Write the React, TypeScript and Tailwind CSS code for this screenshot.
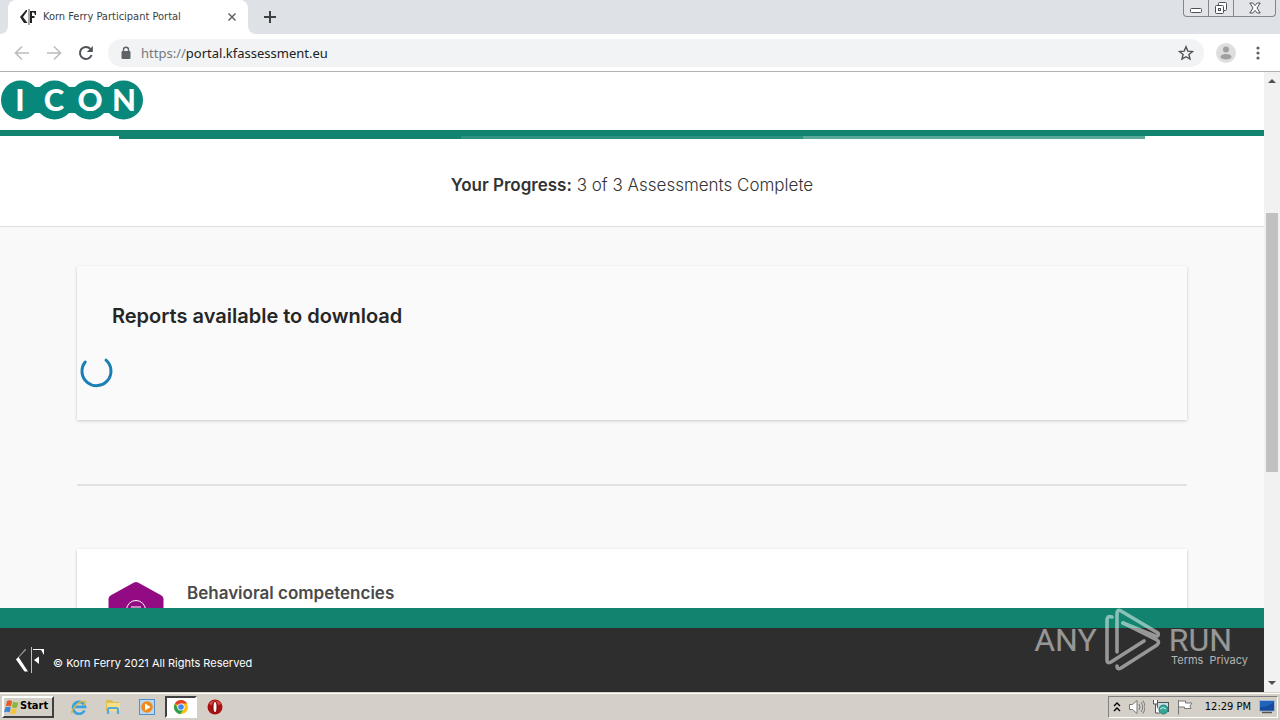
import type { ReactNode } from 'react';

const SEGMENTS = ['bg-[#12836f]', 'bg-[#2f917f]', 'bg-[#5aa99b]'];

function KornFerryMark({ className }: { className: string }) {
  return (
    <svg viewBox="0 0 28 28" className={className} fill="currentColor" aria-hidden="true">
      <path d="M9 3 0 13.500h1L10 4V3z" opacity=".5" />
      <path d="M2.500 11 0 13.500 8.500 25.500h3.500z" />
      <path d="M15 1h1v26h-1z" opacity=".7" />
      <path d="M17 3h11v6l-3-5h-8z" />
      <path d="M18 14l5-3.500V18z" />
    </svg>
  );
}

function TabStrip() {
  return (
    <div className="flex h-[34px] justify-between bg-[#dee1e6]">
      <div className="flex">
        {/* curved feet on both sides of the active tab */}
        <div className="flex w-2 flex-col justify-end">
          <div className="h-2 bg-white">
            <div className="h-2 rounded-br-lg bg-[#dee1e6]" />
          </div>
        </div>
        <div className="flex w-60 items-center rounded-t-lg bg-white pl-3 pr-2">
          <svg viewBox="0 0 16 16" className="h-4 w-4 shrink-0" aria-hidden="true">
            <path d="M6 1 0 8l4 6h3.500L3 8l4-5.500V1z" fill="#222" />
            <path d="M8.500 0h1v16h-1z" fill="#555" />
            <path d="M10 2h6v4h-1l-1-2.500h-2V7h2.500v2H12v5h-2z" fill="#222" />
          </svg>
          <span className="ml-[7px] flex-1 whitespace-nowrap font-['DejaVu_Sans_Condensed','DejaVu_Sans',sans-serif] text-[11px] text-[#3c4043]">
            Korn Ferry Participant Portal
          </span>
          <button type="button" aria-label="Close tab" className="p-1">
            <svg viewBox="0 0 8 8" className="h-2 w-2" stroke="#5f6368" strokeWidth="1.500">
              <path d="M.5.5l7 7M7.500.5l-7 7" />
            </svg>
          </button>
        </div>
        <div className="flex w-2 flex-col justify-end">
          <div className="h-2 bg-white">
            <div className="h-2 rounded-bl-lg bg-[#dee1e6]" />
          </div>
        </div>
        <button type="button" aria-label="New tab" className="px-2">
          <svg viewBox="0 0 12 12" className="h-3 w-3" stroke="#3c4043" strokeWidth="2">
            <path d="M6 0v12M0 6h12" />
          </svg>
        </button>
      </div>
      <div className="mr-1 flex h-[17px] rounded-b border border-t-0 border-[#84868b] bg-[#e2e4e8]">
        <button type="button" aria-label="Minimize" className="flex w-6 items-center justify-center">
          <svg viewBox="0 0 12 12" className="h-3 w-3" fill="#fff" stroke="#4a4f57">
            <rect x=".5" y="6.500" width="11" height="4" rx="1" />
          </svg>
        </button>
        <button type="button" aria-label="Restore" className="flex w-[26px] items-center justify-center border-x border-[#84868b]">
          <svg viewBox="0 0 14 14" className="h-3.5 w-3.5" fill="#fff" stroke="#4a4f57">
            <rect x="4.500" y="1.500" width="8" height="8" rx="1" />
            <rect x="1.500" y="4.500" width="8" height="8" rx="1" />
            <rect x="4.500" y="7.500" width="2" height="2" />
          </svg>
        </button>
        <button type="button" aria-label="Close" className="flex w-[41px] items-center justify-center">
          <svg viewBox="0 0 12 12" className="h-3 w-3" fill="#fff" stroke="#4a4f57">
            <path d="M.8 1h3L6 3.600 8.200 1h3L8 6l3.200 5h-3L6 8.400 3.800 11h-3L4 6z" />
          </svg>
        </button>
      </div>
    </div>
  );
}

function Toolbar() {
  return (
    <div className="flex h-[38px] items-center border-b border-[#b0b1b3] bg-white pl-3.5 pr-4">
      <button type="button" aria-label="Back" className="flex w-8">
        <svg viewBox="0 0 16 16" className="h-4 w-4" fill="none" stroke="#babcbe" strokeWidth="1.600">
          <path d="M15 8H2M8 1.500 1.500 8 8 14.500" />
        </svg>
      </button>
      <button type="button" aria-label="Forward" className="flex w-8">
        <svg viewBox="0 0 16 16" className="h-4 w-4" fill="none" stroke="#babcbe" strokeWidth="1.600">
          <path d="M1 8h13M8 1.500 14.500 8 8 14.500" />
        </svg>
      </button>
      <button type="button" aria-label="Reload" className="flex w-[30px]">
        <svg viewBox="0 0 16 16" className="h-4 w-4" fill="none" stroke="#4f5358" strokeWidth="2">
          <path d="M13.600 10A6 6 0 1 1 12.400 3.900" />
          <path d="M14.800 1v6H8.800z" fill="#4f5358" stroke="none" />
        </svg>
      </button>
      <div className="flex h-7 flex-1 items-center rounded-full bg-[#f1f3f4] pl-3 pr-2.5">
        <svg viewBox="0 0 12 14" className="h-3.5 w-3" aria-hidden="true">
          <rect x="1.500" y="5" width="9" height="8" rx="1" fill="#5f6368" />
          <path d="M3.500 6V3.800a2.500 2.500 0 0 1 5 0V6" fill="none" stroke="#5f6368" strokeWidth="1.400" />
        </svg>
        <a href="#top" className="ml-[9px] flex-1 font-['Noto_Sans',sans-serif] text-[13px] leading-5 text-[#202124]">
          <span className="text-[#75797e]">https://</span>portal.kfassessment.eu
        </a>
        <button type="button" aria-label="Bookmark">
          <svg viewBox="0 0 16 16" className="h-4 w-4" fill="none" stroke="#4f5358" strokeWidth="1.400">
            <path d="M8 1.800l1.800 4.300 4.700.4-3.600 3 1.100 4.600L8 11.700l-4 2.400 1.100-4.600-3.600-3 4.700-.4z" />
          </svg>
        </button>
      </div>
      <button type="button" aria-label="Profile" className="ml-3">
        <svg viewBox="0 0 20 20" className="h-5 w-5">
          <circle cx="10" cy="10" r="10" fill="#dedede" />
          <circle cx="10" cy="6.500" r="3" fill="#a0a0a0" />
          <ellipse cx="10" cy="13.800" rx="5.500" ry="2.800" fill="#a0a0a0" />
        </svg>
      </button>
      <button type="button" aria-label="Menu" className="ml-4 px-1">
        <svg viewBox="0 0 4 14" className="h-3.5 w-1" fill="#5f6368">
          <circle cx="2" cy="2" r="1.600" />
          <circle cx="2" cy="7" r="1.600" />
          <circle cx="2" cy="12" r="1.600" />
        </svg>
      </button>
    </div>
  );
}

function IconLogo() {
  return (
    <svg viewBox="0 0 144 40" className="h-10 w-36" role="img" aria-label="ICON">
      <g fill="#07887a">
        <circle cx="20.500" cy="20" r="19.500" />
        <circle cx="54.500" cy="20" r="19.500" />
        <circle cx="89.500" cy="20" r="19.500" />
        <circle cx="123.500" cy="20" r="19.500" />
        <path d="M30 7h84v26H30z" />
      </g>
      <g fill="#fff" textAnchor="middle" className="font-[Lato,sans-serif] text-[31px] font-black">
        <text x="20" y="31">I</text>
        <text x="54" y="31">C</text>
        <text x="90" y="31">O</text>
        <text x="124" y="31">N</text>
      </g>
    </svg>
  );
}

function Portal() {
  return (
    <div className="flex min-w-0 flex-1 flex-col bg-[#f9f9f9] font-[Inter,sans-serif]">
      <header className="border-b-6 border-[#12836f] bg-white pb-2.5 pt-2">
        <IconLogo />
      </header>

      <main className="min-h-0 flex-1 overflow-hidden">
        <section className="h-[91px] border-b border-[#e0e0e0] bg-white">
          <div className="mx-[119px] flex h-[3px]">
            {SEGMENTS.map((color) => (
              <div key={color} className={`flex-1 ${color}`} />
            ))}
          </div>
          <p className="pt-[34px] text-center text-[17px] font-light leading-6 text-[#333]">
            <strong className="font-semibold">Your Progress:</strong> 3 of 3 Assessments Complete
          </p>
        </section>

        <div className="px-[77px] pt-[39px]">
          <section className="h-[154px] bg-[#fafafa] pt-[38px] shadow-[0_1px_3px_rgba(0,0,0,0.2)]">
            <h2 className="pl-[35px] text-[20px] font-semibold leading-6 text-[#262626]">Reports available to download</h2>
            <svg viewBox="0 0 36 36" className="mt-[25px] h-9 w-9 ml-px" fill="none" stroke="#1a7fb5" strokeWidth="3" strokeLinecap="round" role="img" aria-label="Loading">
              <path d="M7.200 9A14.500 14.500 0 1 0 28 7.200" />
            </svg>
          </section>

          <hr className="mb-[63px] mt-16 border-t-2 border-[#e2e2e2]" />

          <section className="flex h-52 bg-white pl-[31px] pt-8 shadow-[0_1px_3px_rgba(0,0,0,0.2)]">
            <svg viewBox="0 0 56 64" className="h-16 w-14" aria-hidden="true">
              <path d="M26 1.500q2-1 4 0l23.500 13q2 1 2 3.500v28q0 2.500-2 3.500L30 62.500q-2 1-4 0l-23.500-13q-2-1-2-3.500V18q0-2.500 2-3.500z" fill="#920b82" />
              <g fill="none" stroke="#fff">
                <circle cx="28" cy="29" r="9.500" />
                <path d="M23 26h10M25 28v4m6-4v4" />
              </g>
            </svg>
            <h3 className="ml-[23px] text-[17px] font-semibold leading-6 text-[#4a4a4a]">Behavioral competencies</h3>
          </section>
        </div>
      </main>

      <footer className="flex h-[84px] items-center justify-between border-t-20 border-[#12836f] bg-[#2e2e2e] px-4 text-[11px] text-white">
        <div className="flex items-center">
          <KornFerryMark className="h-7 w-7" />
          <span className="ml-[9px] mt-1.5">© Korn Ferry 2021 All Rights Reserved</span>
        </div>
        <nav className="flex gap-1.5 text-[#b4b4b4]">
          <a href="#terms">Terms</a>
          <a href="#privacy">Privacy</a>
        </nav>
      </footer>
    </div>
  );
}

function Scrollbar() {
  return (
    <div className="flex w-4 flex-col items-center justify-between bg-[#f1f1f1] py-[7px]">
      <svg viewBox="0 0 8 4" className="h-1 w-2" fill="#505050"><path d="M0 4l4-4 4 4z" /></svg>
      <div className="flex w-3 flex-1 flex-col">
        <div className="flex-[130]" />
        <div className="flex-[259] bg-[#c1c1c1]" />
        <div className="flex-[209]" />
      </div>
      <svg viewBox="0 0 8 4" className="h-1 w-2" fill="#505050"><path d="M0 0l4 4 4-4z" /></svg>
    </div>
  );
}

function Watermark() {
  return (
    <div className="pointer-events-none absolute bottom-12 right-12 flex items-center font-['Liberation_Sans_Narrow','Roboto',sans-serif] text-[32px] leading-6 text-white opacity-50">
      <span>ANY</span>
      <svg viewBox="0 0 56 64" className="mx-2 h-16 w-14" fill="none" stroke="currentColor" strokeWidth="3.600" strokeLinejoin="round" strokeLinecap="round">
        <path d="M7 9Q2 7 2 13v39q0 4 4 2l33-21" />
        <path d="M12 44V6q0-5 4-3l37 22q1 4-3 3L18 15" />
        <path d="M12 58q0 4 4 2l36-23q3-3 0-5L18 15" />
      </svg>
      <span>RUN</span>
    </div>
  );
}

function TaskButton({ label, active, children }: { label: string; active?: boolean; children: ReactNode }) {
  return (
    <button
      type="button"
      aria-label={label}
      className={`flex h-[22px] w-8 items-center justify-center ${active ? 'border-2 border-b-white border-l-[#404040] border-r-white border-t-[#404040] bg-white' : ''}`}
    >
      <svg viewBox="0 0 16 16" className="h-4 w-4 shrink-0">{children}</svg>
    </button>
  );
}

function Taskbar() {
  return (
    <div className="flex h-7 items-center justify-between border-t border-[#d4d0c8] bg-[#d4d0c8] px-0.5 font-['DejaVu_Sans_Condensed','DejaVu_Sans',sans-serif] shadow-[inset_0_1px_0_#fff]">
      <div className="flex items-center gap-0.5">
        <button type="button" className="mr-[7px] flex h-[22px] w-[52px] items-center border-2 border-b-[#404040] border-l-white border-r-[#404040] border-t-white text-[11px] font-bold text-black">
          <svg viewBox="0 0 16 16" className="h-4 w-4 shrink-0">
            <path d="M3 2q3-1.500 5 .2L7 7.500Q5 6 1.800 7.200z" fill="#e75b24" />
            <path d="M9 2.800q3 1.500 5.500.2L13 8.500q-3 1-5-.5z" fill="#86b83a" />
            <path d="M1.500 8.200Q5 7 6.800 8.500L5.600 13.500Q3.500 12 0 13.200z" fill="#3f85d0" />
            <path d="M7.800 9q2.500 1.500 5 .5L11.500 14.500Q8.500 16 6.500 14z" fill="#f8c52c" />
          </svg>
          Start
        </button>
        <TaskButton label="Internet Explorer">
          <path d="M13.500 11.500A6 6 0 1 1 14 7.800H4" fill="none" stroke="#3aa2df" strokeWidth="2.800" />
          <path d="M1.500 14.500Q-1 13 4.500 7T14.800 2.500q-.2 2-2.300 4" fill="none" stroke="#e3b92d" strokeWidth="1.300" />
        </TaskButton>
        <TaskButton label="Explorer">
          <path d="M1 1h6l1 2h6v9H1z" fill="#e0bd52" />
          <path d="M2 4h13v8H2z" fill="#f7df88" />
          <path d="M3 15v-4.500Q3 9 4.500 9h7q1.500 0 1.500 1.500V15" fill="none" stroke="#56a9d8" strokeWidth="2.200" />
        </TaskButton>
        <TaskButton label="Media Player">
          <rect x=".5" y=".5" width="15" height="15" fill="#b9d9f3" stroke="#5190c8" />
          <circle cx="8" cy="8" r="5.800" fill="#f08a1c" />
          <path d="M6 4.500 11.500 8 6 11.500z" fill="#fff" />
        </TaskButton>
        <TaskButton label="Chrome" active>
          <circle cx="8" cy="8" r="7" fill="#fbc116" />
          <path d="M8 8 1.900 4.500A7 7 0 0 1 14.100 4.500H8z" fill="#e04132" />
          <path d="M1.900 4.500A7 7 0 0 0 7.500 15L11 9.800 5 9.700z" fill="#2da04e" />
          <circle cx="8" cy="8" r="3.600" fill="#fff" />
          <circle cx="8" cy="8" r="2.800" fill="#4285f4" />
        </TaskButton>
        <TaskButton label="Opera">
          <circle cx="8" cy="8" r="7.500" fill="#a81212" />
          <path d="M2 5a7 7 0 0 1 12 0Q8 8 2 5z" fill="#d84a42" />
          <ellipse cx="8" cy="8" rx="3" ry="6" fill="#8c0c0c" />
          <ellipse cx="8" cy="8" rx="1.500" ry="5" fill="#fff" />
        </TaskButton>
      </div>

      <div className="flex h-[22px] items-center gap-2 border border-b-white border-l-[#808080] border-r-white border-t-[#808080] pl-1 pr-0.5 text-[11px] text-black">
        <svg viewBox="0 0 8 10" className="h-2.5 w-2" fill="none" stroke="#000" strokeWidth="1.400">
          <path d="M1 4l3-3 3 3M1 9l3-3 3 3" />
        </svg>
        <svg viewBox="0 0 16 16" className="h-4 w-4" fill="none" stroke="#777">
          <path d="M.5 5.500h3L8 1.500v13L3.500 10.500h-3z" fill="#fff" />
          <path d="M10 5q2 3 0 6M12 3q3.500 5 0 10M14 1.500q4 6.500 0 13" />
        </svg>
        <svg viewBox="0 0 16 16" className="h-4 w-4" fill="none" stroke="#555">
          <rect x="4.500" y="3.500" width="11" height="9" fill="#c6dfe5" />
          <path d="M.5 1v4h4V1M2.500 5v9H7" fill="#fff" />
          <circle cx="10.500" cy="10.500" r="4.500" fill="#37a69a" stroke="#287e79" />
          <path d="M7 10q3-3 6 0" stroke="#d5f3dc" />
        </svg>
        <svg viewBox="0 0 16 16" className="h-4 w-4" fill="#fff" stroke="#777">
          <path d="M1.500 1v14.500M1.500 2h7v2h6.500l-2 3 1 2.500H7.500V8h-6z" />
        </svg>
        <time className="ml-1 mt-0.5 whitespace-nowrap">12:29 PM</time>
        <svg viewBox="0 0 16 14" className="h-3.5 w-4">
          <rect x=".5" y=".5" width="15" height="10.500" fill="#2065bd" stroke="#a5b7cf" />
          <path d="M1 7Q8 8 15 2v8.500H1z" fill="#174b9d" />
          <path d="M3 12.500h10" stroke="#555" strokeWidth="1.500" />
        </svg>
      </div>
    </div>
  );
}

export default function App() {
  return (
    <div className="relative flex h-screen flex-col overflow-hidden">
      <TabStrip />
      <Toolbar />
      <div className="flex min-h-0 flex-1">
        <Portal />
        <Scrollbar />
      </div>
      <Taskbar />
      <Watermark />
    </div>
  );
}
